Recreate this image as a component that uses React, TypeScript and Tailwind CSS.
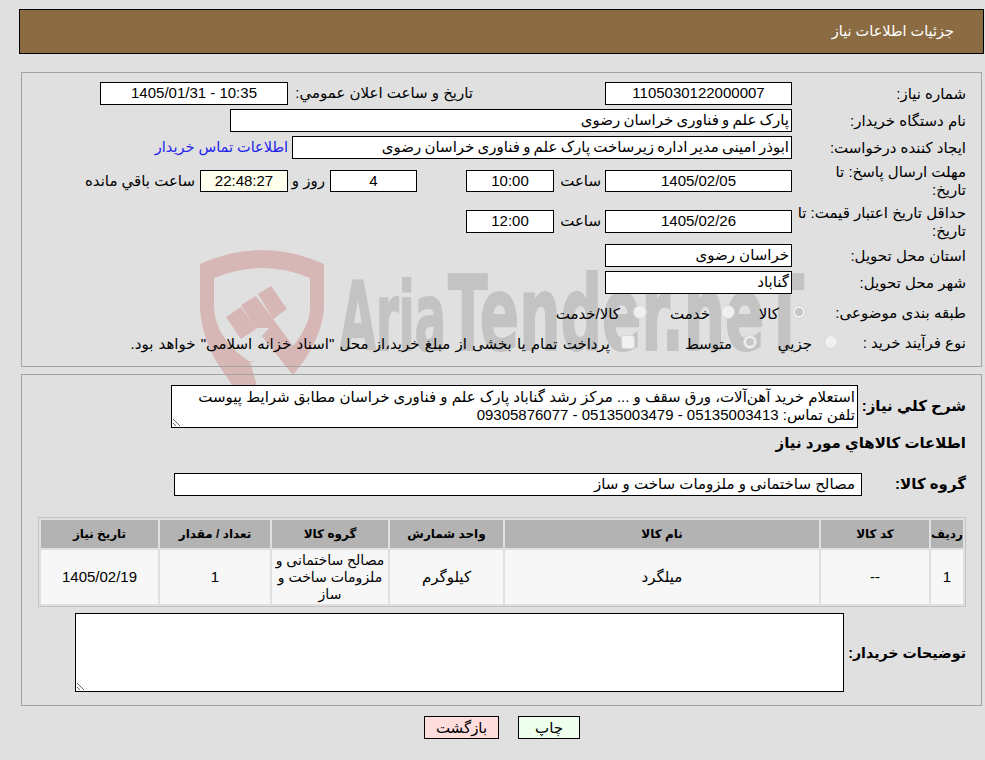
import React from "react";

const font = "[font-family:'Liberation_Sans','DejaVu_Sans',sans-serif]";

function Field({ w, h = "h-[23px]", center, bg = "bg-white", children, extra = "" }: { w: string; h?: string; center?: boolean; bg?: string; children?: React.ReactNode; extra?: string }) {
  return (
    <div className={`${w} ${h} ${bg} ${extra} shrink-0 border border-black flex items-center px-[2px] whitespace-nowrap overflow-hidden ${center ? "justify-center" : "justify-start"}`}>
      {children}
    </div>
  );
}

function Label({ children }: { children: React.ReactNode }) {
  return <div className="w-[174px] shrink-0 leading-[18px] text-right whitespace-nowrap">{children}</div>;
}

function Radio({ checked }: { checked?: boolean }) {
  return (
    <span className="w-[14px] h-[14px] mb-[3px] rounded-full border border-[#d6d6d6] bg-[#f0f0f0] flex items-center justify-center shrink-0">
      {checked && <span className="w-[8px] h-[8px] rounded-full bg-[#c8c8c8]" />}
    </span>
  );
}

function Watermark() {
  return (
    <svg dir="ltr" className="absolute left-0 top-0 pointer-events-none" width="985" height="760" viewBox="0 0 985 760" fill="none">
      <path
        fill="#d7b6b6"
        fillRule="evenodd"
        d="M200 264 Q262 236 324 264 L324 308 Q322 340 293 375 L262 336 L274 322 L293 346 Q310 325 310 308 L310 278 Q262 258 214 278 L214 308 Q216 340 250 362 L256 362 L250 361 L257 386 L232 385 L227 377 Q202 345 200 308 Z"
      />
      <path fill="#d7b6b6" d="M226 317 L241 307 L256 329 L241 339 Z" />
      <path fill="#d7b6b6" d="M241 305 L256 296 L282 331 L293 346 L293 375 L262 336 L272 328 L255 328 Z" />
      <path fill="#d7b6b6" d="M258 294 L271 286 L287 309 L273 319 Z" />
      <text x="340" y="350" direction="ltr" fill="#c3c3c3" stroke="#c3c3c3" strokeWidth="2" fontFamily="'DejaVu Sans', sans-serif" fontWeight="700" fontSize="94" textLength="106" lengthAdjust="spacingAndGlyphs">Aria</text>
      <text x="448" y="350" direction="ltr" fill="#c3c3c3" stroke="#c3c3c3" strokeWidth="2" fontFamily="'DejaVu Sans', sans-serif" fontWeight="700" fontSize="104" textLength="356" lengthAdjust="spacingAndGlyphs">Tender.neT</text>
    </svg>
  );
}

export default function App() {
  return (
    <div dir="rtl" className={`relative min-h-[760px] bg-[#e0e0e0] overflow-hidden text-[15px] text-black ${font}`}>
      <Watermark />
      <div className="relative pt-[9px]">
        <div className="ml-[19px] mr-px h-[45px] bg-[#8b6b42] border border-black flex items-center pr-[29px] text-white text-[14.5px]">
          جزئیات اطلاعات نیاز
        </div>

        <section className="ml-[21px] mr-[3px] mt-[18px] h-[295px] border border-[#a3a3a3] pt-[9px] pr-[15px] flex flex-col">
          <div className="flex items-center h-[23px] mb-[4px]">
            <Label>شماره نیاز:</Label>
            <Field w="w-[187px]" center>1105030122000007</Field>
            <div className="w-[132px] shrink-0" />
            <div className="w-[185px] shrink-0 whitespace-nowrap">تاریخ و ساعت اعلان عمومي:</div>
            <Field w="w-[188px]" center>10:35 - 1405/01/31</Field>
          </div>
          <div className="flex items-center h-[23px] mb-[4px]">
            <Label>نام دستگاه خریدار:</Label>
            <Field w="w-[562px]" extra="[word-spacing:-1px]">پارک علم و فناوری خراسان رضوی</Field>
          </div>
          <div className="flex items-center h-[23px] mb-[4px]">
            <Label>ایجاد کننده درخواست:</Label>
            <Field w="w-[500px]" extra="[word-spacing:-1px]">ابوذر امینی مدیر اداره زیرساخت پارک علم و فناوری خراسان رضوی</Field>
            <a className="mr-[4px] text-[#2222ee] whitespace-nowrap text-[14.5px]">اطلاعات تماس خریدار</a>
          </div>
          <div className="flex items-center h-[36px] mb-[4px]">
            <Label>مهلت ارسال پاسخ: تا<br />تاریخ:</Label>
            <Field w="w-[187px]" h="h-[22px]" center>1405/02/05</Field>
            <div className="w-[51px] shrink-0 pr-[4px]">ساعت</div>
            <Field w="w-[88px]" h="h-[22px]" center>10:00</Field>
            <div className="w-[49px] shrink-0" />
            <Field w="w-[87px]" h="h-[22px]" center>4</Field>
            <div className="w-[42px] shrink-0 pr-[5px]">روز و</div>
            <Field w="w-[88px]" h="h-[22px]" center bg="bg-[#ffffee]">22:48:27</Field>
            <div className="pr-[5px] whitespace-nowrap">ساعت باقي مانده</div>
          </div>
          <div className="flex items-center h-[37px] mb-[4px]">
            <Label>حداقل تاریخ اعتبار قیمت: تا<br />تاریخ:</Label>
            <Field w="w-[187px]" center>1405/02/26</Field>
            <div className="w-[51px] shrink-0 pr-[4px]">ساعت</div>
            <Field w="w-[88px]" center>12:00</Field>
          </div>
          <div className="flex items-center h-[23px] mb-[4px]">
            <Label>استان محل تحویل:</Label>
            <Field w="w-[187px]">خراسان رضوی</Field>
          </div>
          <div className="flex items-center h-[23px] mb-[4px]">
            <Label>شهر محل تحویل:</Label>
            <Field w="w-[187px]">گناباد</Field>
          </div>
          <div className="flex items-center h-[30px]">
            <div className="w-[160px] shrink-0 whitespace-nowrap">طبقه بندی موضوعی:</div>
            <Radio checked />
            <span className="w-[57px] shrink-0 pr-[13px] pt-[2px]">کالا</span>
            <Radio />
            <span className="w-[74px] shrink-0 pr-[11px] pt-[2px]">خدمت</span>
            <Radio />
            <span className="pr-[13px] pt-[2px] whitespace-nowrap">کالا/خدمت</span>
          </div>
          <div className="flex items-center h-[30px]">
            <div className="w-[128px] shrink-0 whitespace-nowrap">نوع فرآیند خرید :</div>
            <Radio />
            <span className="w-[67px] shrink-0 pr-[12px] pt-[2px]">جزيي</span>
            <Radio checked />
            <span className="w-[108px] shrink-0 pr-[11px] pt-[2px]">متوسط</span>
            <span className="w-[14px] h-[14px] mb-[3px] rounded-[3px] border border-[#d6d6d6] bg-[#f0f0f0] shrink-0" />
            <span className="pr-[11px] pt-[2px] whitespace-nowrap [word-spacing:1px]">پرداخت تمام یا بخشی از مبلغ خرید،از محل "اسناد خزانه اسلامی" خواهد بود.</span>
          </div>
        </section>

        <section className="ml-[21px] mr-[3px] mt-[7px] h-[332px] border border-[#a3a3a3] pt-[10px] pr-[15px] flex flex-col">
          <div className="flex items-center h-[43px]">
            <div className="w-[108px] shrink-0 font-bold whitespace-nowrap">شرح كلي نياز:</div>
            <textarea
              readOnly
              dir="rtl"
              rows={2}
              className="w-[687px] h-[43px] shrink-0 bg-white border border-black px-[2px] py-[2px] leading-[18px] resize outline-none overflow-hidden whitespace-pre"
              defaultValue={"استعلام خرید آهن‌آلات، ورق سقف و ... مرکز رشد گناباد پارک علم و فناوری خراسان مطابق شرایط پیوست\nتلفن تماس: 05135003413 - 05135003479 - 09305876077"}
            />
          </div>
          <div className="h-[18px] mt-[6px] font-bold leading-[18px]">اطلاعات كالاهاي مورد نياز</div>
          <div className="flex items-center h-[23px] mt-[21px]">
            <div className="w-[104px] shrink-0 font-bold">گروه کالا:</div>
            <Field w="w-[688px]" extra="pr-[6px]">مصالح ساختمانی و ملزومات ساخت و ساز</Field>
          </div>
          <table className="mt-[21px] w-[928px] h-[90px] table-fixed border-separate border-spacing-[2px] border border-[#c4c4c4] text-center">
            <colgroup>
              <col className="w-[32px]" />
              <col className="w-[108px]" />
              <col className="w-[314px]" />
              <col className="w-[113px]" />
              <col className="w-[116px]" />
              <col className="w-[110px]" />
              <col className="w-[117px]" />
            </colgroup>
            <thead>
              <tr className="h-[28px] bg-[#b3b3b3] text-[12px]">
                <th className="p-0 font-bold">ردیف</th>
                <th className="p-0 font-bold">کد کالا</th>
                <th className="p-0 font-bold">نام کالا</th>
                <th className="p-0 font-bold">واحد شمارش</th>
                <th className="p-0 font-bold">گروه کالا</th>
                <th className="p-0 font-bold">تعداد / مقدار</th>
                <th className="p-0 font-bold">تاریخ نیاز</th>
              </tr>
            </thead>
            <tbody>
              <tr className="h-[54px] bg-[#f7f7f7]">
                <td className="p-0">1</td>
                <td className="p-0">--</td>
                <td className="p-0">میلگرد</td>
                <td className="p-0">کیلوگرم</td>
                <td className="p-0 leading-[17px] text-[14px] whitespace-nowrap">مصالح ساختمانی و<br />ملزومات ساخت و<br />ساز</td>
                <td className="p-0">1</td>
                <td className="p-0">1405/02/19</td>
              </tr>
            </tbody>
          </table>
          <div className="flex items-center h-[79px] mt-[6px]">
            <div className="w-[122px] shrink-0 font-bold text-[14.2px] whitespace-nowrap pt-[2px]">توضیحات خریدار:</div>
            <textarea readOnly dir="rtl" className="w-[769px] h-[79px] shrink-0 bg-white border border-black resize outline-none overflow-hidden" />
          </div>
        </section>

        <div className="flex justify-center gap-[19px] mt-[10px] pl-[19px]">
          <button className="w-[62px] h-[23px] bg-[#eeffee] border border-black">چاپ</button>
          <button className="w-[75px] h-[23px] bg-[#ffdddd] border border-black">بازگشت</button>
        </div>
      </div>
    </div>
  );
}
